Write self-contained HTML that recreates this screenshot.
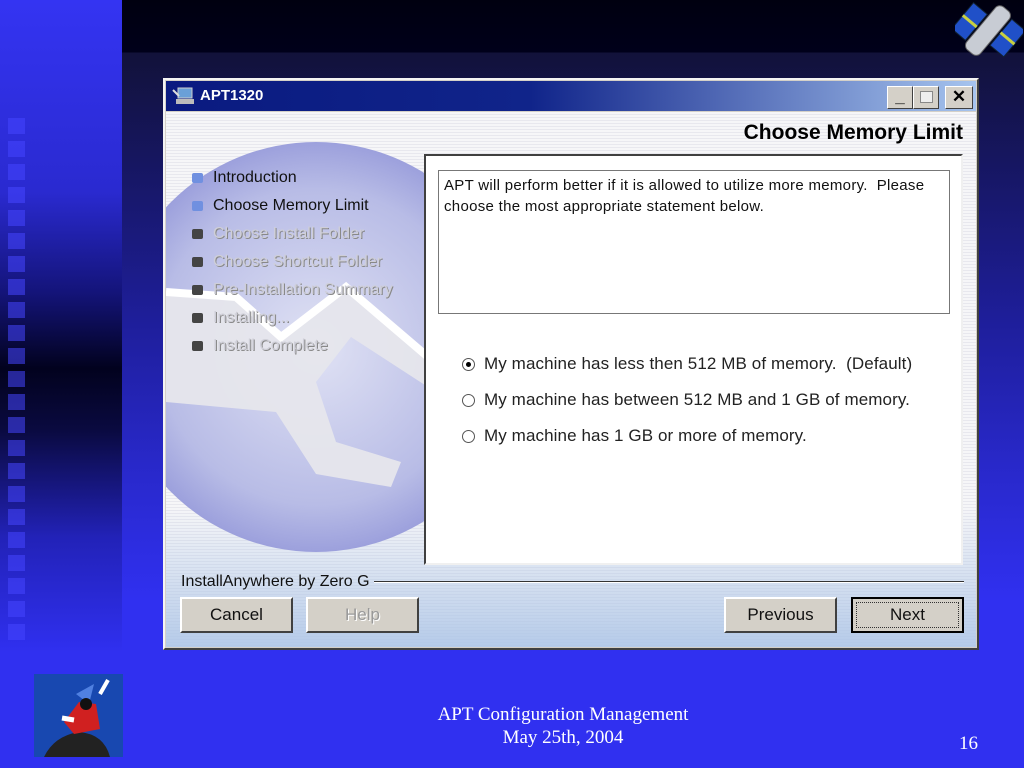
<!DOCTYPE html>
<html><head><meta charset="utf-8"><style>
*{margin:0;padding:0;box-sizing:border-box}
body{width:1024px;height:768px;overflow:hidden;position:relative;background:#3030f0;font-family:"Liberation Sans",sans-serif}
.abs{position:absolute}
#left{left:0;top:0;width:122px;height:768px;background:linear-gradient(to bottom,#3434f2 0%,#2a2ad0 25%,#14147a 38%,#02021e 48%,#0a0a40 56%,#2222b8 70%,#3030f0 85%)}
#right{left:122px;top:0;width:902px;height:768px;background:linear-gradient(to bottom,#000010 0,#00001a 52px,#12123a 53px,#161660 160px,#1e1e9a 320px,#2828c8 460px,#3030f0 600px)}
.sq{position:absolute;left:8px;width:17px;height:16px;background:rgba(70,70,255,0.55)}
#dlg{left:163px;top:78px;width:816px;height:572px;background:#d4d0c8;border:2px solid;border-color:#f4f4f4 #404040 #404040 #f4f4f4}
#body{position:absolute;left:1px;top:32px;right:1px;bottom:1px;overflow:hidden;background:repeating-linear-gradient(to bottom,#f6f6f8 0,#f6f6f8 2px,#e8e8ee 2px,#e8e8ee 3px);}
#body:after{content:"";position:absolute;left:0;right:0;bottom:0;height:140px;background:linear-gradient(to bottom,rgba(190,210,235,0),rgba(170,195,230,0.85))}
#title{position:absolute;left:1px;top:1px;right:1px;height:30px;background:linear-gradient(to right,#0a1a80 0%,#10248a 45%,#a6c4ee 100%);color:#fff;font-weight:bold;font-size:15px;line-height:30px;padding-left:34px}
.tb{position:absolute;top:5px;width:26px;height:23px;background:#d4d0c8;border:1px solid;border-color:#fff #404040 #404040 #fff;font-weight:bold;color:#000;text-align:center;font-size:17px;line-height:20px}
.btn{position:absolute;top:485px;width:113px;height:36px;background:#d4d0c8;border:2px solid;border-color:#fff #404040 #404040 #fff;font-size:17px;text-align:center;line-height:32px;color:#111;z-index:3}
.step{position:absolute;left:47px;font-size:16px;color:#cfcfd8;text-shadow:1px 1px 0 #888;z-index:3}
.step:before{content:"";position:absolute;left:-21px;top:4px;width:11px;height:10px;background:#444;border-radius:2px}
.step.on{color:#111;text-shadow:none}
.step.on:before{background:#7090e0}
.rad{position:absolute;left:58px;font-size:17px;color:#222;letter-spacing:0.1px}
.rad:before{content:"";position:absolute;left:-22px;top:4px;width:11px;height:11px;border-radius:50%;border:1px solid #555;background:#fff}
.rad.sel:after{content:"";position:absolute;left:-18px;top:8px;width:5px;height:5px;border-radius:50%;background:#000}
.ft{color:#fff;font-family:"Liberation Serif",serif;font-size:19px}
</style></head><body>
<div class="abs" id="left"></div>
<div class="abs" id="right"></div>
<div class="sq" style="top:118px"></div><div class="sq" style="top:141px"></div><div class="sq" style="top:164px"></div><div class="sq" style="top:187px"></div><div class="sq" style="top:210px"></div><div class="sq" style="top:233px"></div><div class="sq" style="top:256px"></div><div class="sq" style="top:279px"></div><div class="sq" style="top:302px"></div><div class="sq" style="top:325px"></div><div class="sq" style="top:348px"></div><div class="sq" style="top:371px"></div><div class="sq" style="top:394px"></div><div class="sq" style="top:417px"></div><div class="sq" style="top:440px"></div><div class="sq" style="top:463px"></div><div class="sq" style="top:486px"></div><div class="sq" style="top:509px"></div><div class="sq" style="top:532px"></div><div class="sq" style="top:555px"></div><div class="sq" style="top:578px"></div><div class="sq" style="top:601px"></div><div class="sq" style="top:624px"></div>

<svg class="abs" style="left:955px;top:0" width="68" height="68" viewBox="0 0 68 68">
<g transform="rotate(40 34 34)">
<rect x="22" y="4" width="18" height="56" rx="6" fill="#c8ccd4" stroke="#666"/>
<rect x="2" y="20" width="18" height="34" fill="#2050c8" stroke="#123"/>
<rect x="42" y="8" width="18" height="34" fill="#2050c8" stroke="#123"/>
<rect x="2" y="35" width="18" height="3" fill="#c8d040"/><rect x="42" y="24" width="18" height="3" fill="#c8d040"/>
</g></svg>

<div class="abs" id="dlg">
 <div id="title">APT1320
  <svg style="position:absolute;left:6px;top:5px" width="24" height="20"><rect x="6" y="2" width="14" height="10" fill="#6aa0d8" stroke="#ccc"/><rect x="4" y="13" width="18" height="5" fill="#bbb"/><path d="M1 4 L7 10" stroke="#ddd" stroke-width="2"/></svg>
  <div class="tb" style="left:721px">_</div>
  <div class="tb" style="left:747px"><span style="display:inline-block;width:13px;height:12px;border:1px solid #888;margin-top:4px;background:#eee"></span></div>
  <div class="tb" style="left:779px;width:28px">✕</div>
 </div>
 <div id="body">
  <svg style="position:absolute;left:0;top:0;z-index:1" width="262" height="450" viewBox="0 0 262 450">
   <defs><radialGradient id="g" cx="0.5" cy="0.5" r="0.55"><stop offset="0" stop-color="#e0e2f4"/><stop offset="0.7" stop-color="#b8bce6"/><stop offset="1" stop-color="#9094d8"/></radialGradient></defs>
   <circle cx="150" cy="235" r="205" fill="url(#g)"/>
   <path d="M0 180 L70 185 L115 225 L180 175 L262 245 L262 275 L185 225 L150 270 L170 330 L235 350 L225 375 L150 362 L110 300 L0 290 Z" fill="#e6e6ec" opacity="0.95"/>
   <path d="M0 180 L70 185 L115 225 L180 175 L262 245" stroke="#fff" stroke-width="8" fill="none"/>
  </svg>
  <div style="position:absolute;right:13px;top:9px;font-size:21px;font-weight:bold;color:#000;z-index:3">Choose Memory Limit</div>
  <div class="step on" style="top:57px">Introduction</div>
  <div class="step on" style="top:85px">Choose Memory Limit</div>
  <div class="step" style="top:113px">Choose Install Folder</div>
  <div class="step" style="top:141px">Choose Shortcut Folder</div>
  <div class="step" style="top:169px">Pre-Installation Summary</div>
  <div class="step" style="top:197px">Installing...</div>
  <div class="step" style="top:225px">Install Complete</div>
  <div style="position:absolute;left:258px;top:42px;width:539px;height:411px;background:#fff;border:2px solid;border-color:#404040 #f0f0f0 #f0f0f0 #404040;z-index:3">
   <div style="position:absolute;left:12px;top:14px;width:512px;height:144px;border:1px solid #777;font-size:15px;letter-spacing:0.3px;line-height:21px;padding:4px 5px;color:#111">APT will perform better if it is allowed to utilize more memory.&nbsp; Please<br>choose the most appropriate statement below.</div>
   <div class="rad sel" style="top:198px">My machine has less then 512 MB of memory.&nbsp;&nbsp;(Default)</div>
   <div class="rad" style="top:234px">My machine has between 512 MB and 1 GB of memory.</div>
   <div class="rad" style="top:270px">My machine has 1 GB or more of memory.</div>
  </div>
  <div style="position:absolute;left:15px;top:461px;font-size:16px;color:#111;z-index:3">InstallAnywhere by Zero G</div>
  <div style="position:absolute;left:208px;top:469px;width:590px;height:2px;background:#333;border-bottom:1px solid #fff;z-index:3"></div>
  <div class="btn" style="left:14px">Cancel</div>
  <div class="btn" style="left:140px;color:#999;text-shadow:1px 1px 0 #fff">Help</div>
  <div class="btn" style="left:558px">Previous</div>
  <div class="btn" style="left:685px;border-color:#000"><span style="position:absolute;left:3px;top:3px;right:3px;bottom:3px;border:1px dotted #333"></span>Next</div>
 </div>
</div>

<svg class="abs" style="left:34px;top:674px" width="89" height="83" viewBox="0 0 89 83">
<rect width="89" height="83" fill="#1848b0"/>
<path d="M10 83 Q20 62 45 58 Q70 60 76 83Z" fill="#222"/>
<path d="M42 20 L60 10 L55 30Z" fill="#5080e0"/>
<path d="M45 28 L62 30 L66 55 L40 60 L30 48Z" fill="#d02020"/>
<circle cx="52" cy="30" r="6" fill="#111"/>
<path d="M66 20 L74 6" stroke="#fff" stroke-width="4"/>
<path d="M28 44 L40 46" stroke="#fff" stroke-width="5"/>
</svg>

<div class="abs ft" style="left:380px;width:366px;top:703px;text-align:center;line-height:23px">APT Configuration Management<br>May 25th, 2004</div>
<div class="abs ft" style="left:959px;top:733px">16</div>
</body></html>
